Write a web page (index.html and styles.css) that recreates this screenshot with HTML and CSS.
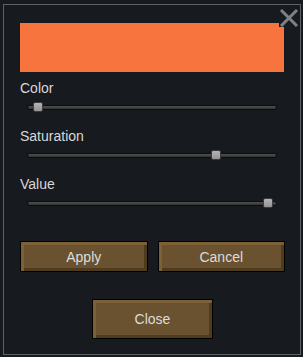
FILE: index.html
```html
<!DOCTYPE html>
<html lang="en">
<head>
    <meta charset="UTF-8">
    <meta name="viewport" content="width=device-width, initial-scale=1.0">
    <title>Color picker</title>
    <link rel="stylesheet" href="styles.css">
</head>
<body>
    <div class="dialog">
        <button class="close-x" aria-label="Close">
            <svg width="20" height="18" viewBox="0 0 20 18">
                <path d="M2 1 L18 17 M18 1 L2 17" stroke="#7d8185" stroke-width="3" fill="none"/>
            </svg>
        </button>

        <div class="swatch"></div>

        <div class="field">
            <div class="label">Color</div>
            <div class="slider"><span class="thumb" style="left: 6px"></span></div>
        </div>
        <div class="field">
            <div class="label">Saturation</div>
            <div class="slider"><span class="thumb" style="left: 184px"></span></div>
        </div>
        <div class="field">
            <div class="label">Value</div>
            <div class="slider"><span class="thumb" style="left: 236px"></span></div>
        </div>

        <div class="actions">
            <button class="btn">Apply</button>
            <button class="btn">Cancel</button>
        </div>
        <div class="footer">
            <button class="btn btn-close">Close</button>
        </div>
    </div>
</body>
</html>
```

FILE: styles.css
```css
body {
    margin: 0;
    padding: 4px 0 0 3px;
    background-color: #171a1f;
    font-family: "Liberation Sans", Arial, sans-serif;
    font-size: 14px;
    color: #d8d8d8;
}

.dialog {
    position: relative;
    box-sizing: border-box;
    width: 298px;
    height: 351px;
    border: 1px solid #5c626a;
    padding: 18px 15px 0 16px;
}

.close-x {
    position: absolute;
    top: 4px;
    right: 1px;
    width: 20px;
    height: 18px;
    padding: 0;
    border: none;
    background: #171a1f;
    cursor: pointer;
}

.close-x svg {
    display: block;
}

.swatch {
    width: 264px;
    height: 49px;
    background-color: #f8743e;
}

.field {
    margin-top: 8px;
}

.field + .field {
    margin-top: 15px;
}

.label {
    line-height: 16px;
}

.slider {
    position: relative;
    width: 250px;
    height: 11px;
    margin: 6px 0 0 7px;
}

.slider::before {
    content: "";
    position: absolute;
    left: 0;
    right: 0;
    top: 3px;
    height: 5px;
    box-sizing: border-box;
    border: 1px solid #0b0c0e;
    border-radius: 3px;
    background: linear-gradient(#505050, #333);
}

.thumb {
    position: absolute;
    top: 0;
    width: 10px;
    height: 10px;
    box-sizing: border-box;
    border: 1px solid #3c3c3c;
    border-radius: 2px;
    background: linear-gradient(#b4b4b4, #949494);
}

.actions {
    display: flex;
    gap: 10px;
    margin-top: 32px;
}

.btn {
    flex: 1;
    height: 31px;
    padding: 0;
    border: 1px solid #000;
    background-color: #6a5230;
    box-shadow: inset 3px 3px 0 #7c6136, inset -3px -3px 0 #4f3c1e;
    font-family: inherit;
    font-size: 14px;
    color: #dcdcdc;
    cursor: pointer;
}

.footer {
    display: flex;
    justify-content: center;
    margin-top: 27px;
}

.btn-close {
    flex: none;
    width: 121px;
    height: 40px;
}
```
